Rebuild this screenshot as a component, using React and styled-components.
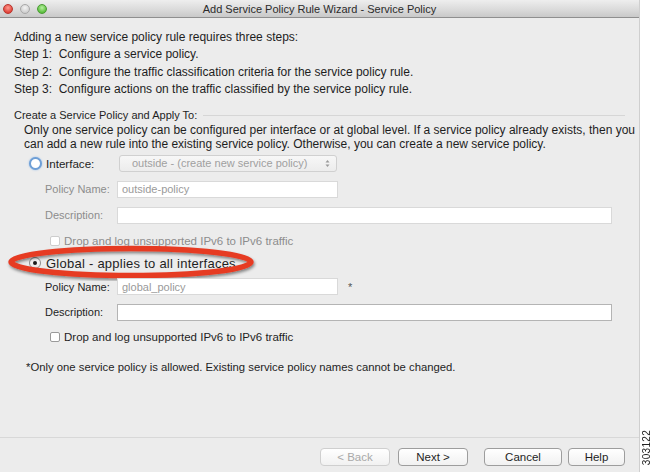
import React from "react";
import styled, { createGlobalStyle } from "styled-components";

const GlobalStyle = createGlobalStyle`
  html, body {
    margin: 0;
    padding: 0;
    background: #ffffff;
  }
  body {
    font-family: "Liberation Sans", Arial, sans-serif;
    font-size: 11px;
    color: #1e1e1e;
  }
`;

const Page = styled.div`
  display: flex;
  width: 653px;
  height: 472px;
  overflow: hidden;
`;

const Window = styled.div`
  width: 639px;
  height: 472px;
  display: flex;
  flex-direction: column;
  background: #ececec;
  border-right: 1px solid #cfcfcf;
`;

const TitleBar = styled.div`
  height: 17px;
  flex-shrink: 0;
  display: grid;
  grid-template-columns: 60px 1fr 60px;
  align-items: center;
  background: linear-gradient(#eeeeee, #d9d9d9 60%, #c9c9c9);
  border-bottom: 1px solid #8f8f8f;
`;

const Lights = styled.div`
  display: flex;
  gap: 7px;
  padding-left: 3px;
`;

const Light = styled.span`
  width: 10px;
  height: 10px;
  border-radius: 50%;
  box-sizing: border-box;
  border: 1px solid ${(p) => p.$edge};
  background: radial-gradient(circle at 50% 35%, ${(p) => p.$hi}, ${(p) => p.$base} 70%);
`;

const Title = styled.div`
  text-align: center;
  font-size: 11px;
  color: #2b2b2b;
  white-space: nowrap;
`;

const Content = styled.div`
  flex: 1;
  padding: 11px 0 0 14px;
`;

const Line = styled.div`
  font-size: 12px;
  line-height: 17.3px;
  white-space: nowrap;
`;

const GroupHead = styled.div`
  margin-top: 9px;
  display: flex;
  align-items: center;
  gap: 6px;
  line-height: 16px;
  padding-right: 14px;
  white-space: nowrap;
  &::after {
    content: "";
    flex: 1;
    height: 1px;
    background: #d6d6d6;
  }
`;

const Note = styled.div`
  padding-left: 10px;
  font-size: 12px;
  line-height: 14px;
  white-space: nowrap;
`;

const Form = styled.div`
  display: grid;
  grid-template-rows: 26px 26px 26px 25px 20px 27px 24px 26px;
  padding-left: 15px;
  margin-top: -1px;
`;

const Row = styled.div`
  position: relative;
  display: flex;
  align-items: center;
  padding-left: ${(p) => p.$indent || 0}px;
  color: ${(p) => (p.$disabled ? "#8c8c8c" : "#1e1e1e")};
  font-size: ${(p) => p.$size || 11}px;
  letter-spacing: ${(p) => p.$track || 0}px;
  white-space: nowrap;
`;

const Radio = styled.span`
  width: ${(p) => (p.$focus ? 13 : 12)}px;
  height: ${(p) => (p.$focus ? 13 : 12)}px;
  box-sizing: border-box;
  border-radius: 50%;
  margin-right: ${(p) => (p.$focus ? 4 : 5)}px;
  display: flex;
  align-items: center;
  justify-content: center;
  background: ${(p) => (p.$focus ? "#ffffff" : "linear-gradient(#ffffff, #e4e4e4)")};
  border: ${(p) => (p.$focus ? "2px solid #6f9fd6" : "1px solid #8e8e8e")};
  box-shadow: ${(p) => (p.$focus ? "0 0 2px #8fb8e8" : "none")};
  &::after {
    content: "";
    display: ${(p) => (p.$checked ? "block" : "none")};
    width: 4px;
    height: 4px;
    border-radius: 50%;
    background: #1b1b1b;
  }
`;

const Label = styled.span`
  width: ${(p) => p.$width || 72}px;
  flex-shrink: 0;
`;

const Field = styled.div`
  box-sizing: border-box;
  width: ${(p) => p.$width}px;
  height: 17px;
  background: #ffffff;
  border: 1px solid ${(p) => (p.$strong ? "#b4b4b4" : "#d9d9d9")};
  padding-left: 4px;
  display: flex;
  align-items: center;
  font-size: 11px;
  letter-spacing: 0;
  color: #9a9a9a;
`;

const Select = styled.div`
  box-sizing: border-box;
  width: 218px;
  height: 17px;
  margin-left: 2px;
  border: 1px solid #d0d0d0;
  border-radius: 3px;
  background: linear-gradient(#f7f7f7, #ececec);
  display: flex;
  align-items: center;
  justify-content: space-between;
  padding: 0 6px 0 12px;
  font-size: 11px;
  letter-spacing: 0;
  color: #a0a0a0;
`;

const Star = styled.span`
  margin-left: 10px;
  color: #555;
`;

const Check = styled.span`
  width: 10px;
  height: 10px;
  box-sizing: border-box;
  border-radius: 2px;
  margin-right: 4px;
  background: #ffffff;
  border: 1px solid ${(p) => (p.$disabled ? "#cdcdcd" : "#9a9a9a")};
`;

const Ring = styled.svg`
  position: absolute;
  left: -23px;
  top: -8px;
  pointer-events: none;
`;

const Footnote = styled.div`
  margin-top: 9px;
  padding-left: 12px;
  font-size: 11.3px;
  line-height: 16px;
  white-space: nowrap;
`;

const Footer = styled.div`
  box-sizing: border-box;
  height: 35px;
  flex-shrink: 0;
  border-top: 1px solid #d8d8d8;
  display: flex;
  justify-content: flex-end;
  align-items: flex-start;
  padding: 10px 14px 0 0;
`;

const Button = styled.div`
  box-sizing: border-box;
  width: ${(p) => p.$width}px;
  height: 18px;
  margin-left: ${(p) => p.$gap || 0}px;
  border-radius: 4px;
  border: 1px solid ${(p) => (p.$disabled ? "#cfcfcf" : "#9d9d9d")};
  background: linear-gradient(#ffffff, #f1f1f1);
  color: ${(p) => (p.$disabled ? "#a9a9a9" : "#1e1e1e")};
  display: flex;
  align-items: center;
  justify-content: center;
  font-size: 11.5px;
`;

const Side = styled.div`
  flex: 1;
  background: #ffffff;
  display: flex;
  flex-direction: column;
  justify-content: flex-end;
  align-items: center;
  padding-bottom: 7px;
`;

const Stamp = styled.span`
  writing-mode: vertical-rl;
  transform: rotate(180deg);
  font-size: 10px;
  color: #222;
  letter-spacing: 0.3px;
`;

const Arrows = () => (
  <svg width="5" height="9" viewBox="0 0 5 9">
    <path d="M0.5 3.5 L2.5 1 L4.5 3.5 Z" fill="#9a9a9a" />
    <path d="M0.5 5.5 L2.5 8 L4.5 5.5 Z" fill="#9a9a9a" />
  </svg>
);

const App = () => {
  return (
    <Page>
      <GlobalStyle />
      <Window>
        <TitleBar>
          <Lights>
            <Light $hi="#ff9a90" $base="#e0443a" $edge="#b8352d" />
            <Light $hi="#f4f4f4" $base="#cfcfcf" $edge="#a8a8a8" />
            <Light $hi="#b8f0a0" $base="#5cbf3f" $edge="#4a9a34" />
          </Lights>
          <Title>Add Service Policy Rule Wizard - Service Policy</Title>
          <span />
        </TitleBar>

        <Content>
          <Line>Adding a new service policy rule requires three steps:</Line>
          <Line>Step 1:&nbsp; Configure a service policy.</Line>
          <Line>Step 2:&nbsp; Configure the traffic classification criteria for the service policy rule.</Line>
          <Line>Step 3:&nbsp; Configure actions on the traffic classified by the service policy rule.</Line>

          <GroupHead>Create a Service Policy and Apply To:</GroupHead>
          <Note>
            Only one service policy can be configured per interface or at global level. If a service policy already exists, then you
            <br />
            can add a new rule into the existing service policy. Otherwise, you can create a new service policy.
          </Note>

          <Form>
            <Row $size={11.6}>
              <Radio $focus />
              <Label $width={71}>Interface:</Label>
              <Select>
                <span>outside - (create new service policy)</span>
                <Arrows />
              </Select>
            </Row>
            <Row $indent={16} $disabled>
              <Label>Policy Name:</Label>
              <Field $width={221}>outside-policy</Field>
            </Row>
            <Row $indent={16} $disabled>
              <Label>Description:</Label>
              <Field $width={495} />
            </Row>
            <Row $indent={21} $disabled $size={11.5}>
              <Check $disabled />
              Drop and log unsupported IPv6 to IPv6 traffic
            </Row>
            <Row $size={13} $track={0.25}>
              <Ring width="252" height="36" viewBox="0 0 252 36">
                <defs>
                  <filter id="shade" x="-10%" y="-30%" width="120%" height="160%">
                    <feDropShadow dx="1" dy="2" stdDeviation="1.5" floodColor="#000" floodOpacity="0.45" />
                  </filter>
                </defs>
                <ellipse cx="125" cy="17" rx="120" ry="13.5" fill="none" stroke="#e63a24" strokeWidth="5.5" filter="url(#shade)" />
              </Ring>
              <Radio $checked />
              Global - applies to all interfaces
            </Row>
            <Row $indent={16}>
              <Label>Policy Name:</Label>
              <Field $width={221}>global_policy</Field>
              <Star>*</Star>
            </Row>
            <Row $indent={16}>
              <Label>Description:</Label>
              <Field $width={495} $strong />
            </Row>
            <Row $indent={21} $size={11.5}>
              <Check />
              Drop and log unsupported IPv6 to IPv6 traffic
            </Row>
          </Form>

          <Footnote>*Only one service policy is allowed. Existing service policy names cannot be changed.</Footnote>
        </Content>

        <Footer>
          <Button $width={70} $disabled>&lt; Back</Button>
          <Button $width={70} $gap={8}>Next &gt;</Button>
          <Button $width={78} $gap={16}>Cancel</Button>
          <Button $width={57} $gap={6}>Help</Button>
        </Footer>
      </Window>
      <Side>
        <Stamp>303122</Stamp>
      </Side>
    </Page>
  );
};

export default App;
